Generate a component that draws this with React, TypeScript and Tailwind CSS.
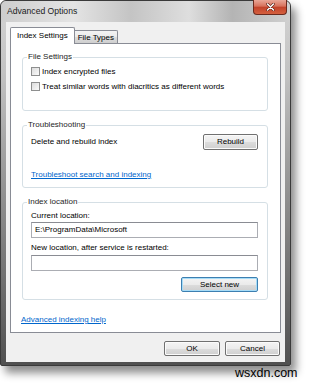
import React from "react";

const font = { fontFamily: '"Liberation Sans", Arial, sans-serif' };

function Checkbox() {
  return (
    <span className="inline-block w-[9px] h-[9px] border border-[#8e8f8f] bg-gradient-to-br from-[#dcdcdc] to-[#fbfbfb] shrink-0" />
  );
}

function Button({ label, w, primary = false }: { label: string; w: string; primary?: boolean }) {
  return (
    <button
      className={
        "h-[15px] text-[8px] leading-none text-black rounded-[2px] border bg-[linear-gradient(#f4f4f4,#ebebeb_50%,#dddddd_50%,#cfcfcf)] " +
        w +
        (primary
          ? " border-[#3c7fb1] shadow-[inset_0_0_0_1px_#a7dcf7]"
          : " border-[#707070] shadow-[inset_0_0_0_1px_#fbfbfb]")
      }
    >
      {label}
    </button>
  );
}

function Group({ title, h, children }: { title: string; h: string; children: React.ReactNode }) {
  return (
    <fieldset className={"border border-[#d5dfe5] rounded-[3px] pl-[8px] pr-[9px] " + h}>
      <legend className="-ml-[4px] px-[1px] text-[8px] leading-[10px] text-[#1e1e1e]">{title}</legend>
      {children}
    </fieldset>
  );
}

export default function App() {
  return (
    <div className="w-[309px] h-[383px] bg-white relative overflow-hidden" style={font}>
      {/* WINDOW */}
      <div className="w-[291px] h-[366px] border border-[#3a3a3a] rounded-t-[6px] rounded-b-[2px] flex flex-col bg-[linear-gradient(#d4d4d4,#c2c2c2_20%,#8e8e8e_55%,#505050)] shadow-[5px_7px_9px_rgba(0,0,0,0.45)]">
        {/* TITLE BAR */}
        <div className="h-[21px] shrink-0 flex justify-between pl-[6px] pr-[3px] rounded-t-[6px] bg-[linear-gradient(90deg,#cdcdcd,#e4e4e4_25%,#c4c4c4_45%,#dedede_65%,#b4b4b4_80%,#d0d0d0)]">
          <span className="pt-[5px] text-[8.6px] leading-[10px] text-[#1b1b1b]">Advanced Options</span>
          <div className="w-[34px] h-[15px] -mt-px rounded-b-[4px] border border-[#6b2a1e] border-t-0 bg-[linear-gradient(#e9a797,#d7715b_45%,#c2422a_50%,#d4603f)] flex items-center justify-center">
            <svg width="9" height="8" viewBox="0 0 9 8">
              <path d="M1.5 1 L7.5 7 M7.5 1 L1.5 7" stroke="#5a1d12" strokeWidth="2.6" strokeLinecap="round" />
              <path d="M1.5 1 L7.5 7 M7.5 1 L1.5 7" stroke="#ffffff" strokeWidth="1.5" strokeLinecap="round" />
            </svg>
          </div>
        </div>

        {/* CLIENT */}
        <div className="flex-1 px-[5px] pb-[3px]">
          <div className="h-full bg-[#f0f0f0] pt-[5px] px-[4px] flex flex-col text-black">
            {/* TABS */}
            <div className="flex items-end h-[17px] -mb-px relative z-10">
              <div className="h-[17px] px-[6px] pt-[3px] bg-white border border-[#898c95] border-b-0 rounded-t-[2px] text-[8px] leading-[10px]">
                Index Settings
              </div>
              <div className="h-[13px] mb-px px-[3px] pt-[2px] border border-[#898c95] border-b-0 border-l-0 rounded-tr-[2px] bg-[linear-gradient(#f3f3f3,#ebebeb_50%,#dddddd_50%,#cfcfcf)] text-[8px] leading-[10px]">
                File Types
              </div>
            </div>

            {/* PANEL */}
            <div className="h-[290px] w-[271px] border border-[#898c95] bg-white pt-[8px] pl-[11px] pr-[12px]">
              <Group title="File Settings" h="h-[59px]">
                <div className="flex flex-col mt-[2px] text-[8px] leading-[15px]">
                  <label className="flex items-center gap-[2px] h-[15px]">
                    <Checkbox />
                    <span>Index encrypted files</span>
                  </label>
                  <label className="flex items-center gap-[2px] h-[15px] whitespace-nowrap">
                    <Checkbox />
                    <span>Treat similar words with diacritics as different words</span>
                  </label>
                </div>
              </Group>

              <div className="mt-[9px]">
                <Group title="Troubleshooting" h="h-[68px]">
                  <div className="flex items-center justify-between mt-[4px] text-[8px]">
                    <span>Delete and rebuild index</span>
                    <Button label="Rebuild" w="w-[55px] h-[16px]" />
                  </div>
                  <a className="block mt-[20px] text-[8px] leading-[10px] text-[#0066cc] underline">
                    Troubleshoot search and indexing
                  </a>
                </Group>
              </div>

              <div className="mt-[9px]">
                <Group title="Index location" h="h-[103px]">
                  <div className="mt-[4px] text-[8px] leading-[10px]">Current location:</div>
                  <div className="mt-[1px] h-[16px] border border-[#abadb3] border-t-[#8a8c93] bg-white px-[3px] text-[8px] leading-[14px]">
                    E:\ProgramData\Microsoft
                  </div>
                  <div className="mt-[5px] text-[8px] leading-[10px]">
                    New location, after service is restarted:
                  </div>
                  <div className="mt-[2px] h-[16px] border border-[#abadb3] border-t-[#8a8c93] bg-white" />
                  <div className="flex justify-end mt-[6px]">
                    <Button label="Select new" w="w-[77px]" primary />
                  </div>
                </Group>
              </div>

              <a className="block mt-[15px] -ml-px text-[8px] leading-[10px] text-[#0066cc] underline">
                Advanced indexing help
              </a>
            </div>

            {/* FOOTER */}
            <div className="flex justify-end gap-[5px] mt-[8px] pr-px">
              <Button label="OK" w="w-[56px]" />
              <Button label="Cancel" w="w-[55px]" />
            </div>
          </div>
        </div>
      </div>

      {/* WATERMARK */}
      <span className="absolute left-[235px] top-[366px] text-[12.5px] leading-[14px] text-black">
        wsxdn.com
      </span>
    </div>
  );
}
